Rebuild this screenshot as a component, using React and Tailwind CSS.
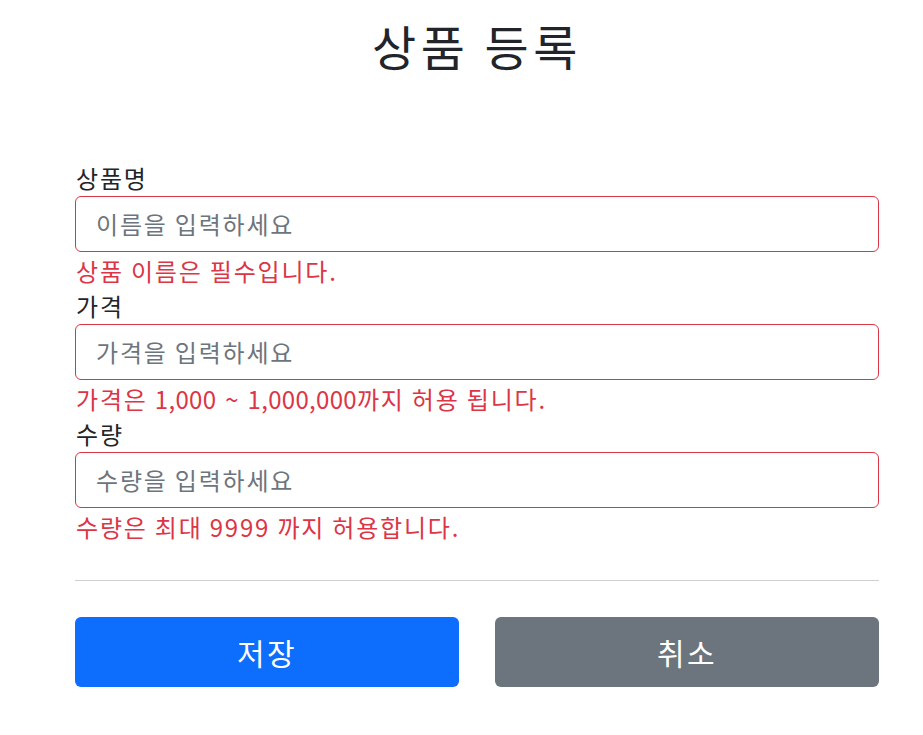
import React from "react";

const font = { fontFamily: '"Noto Sans CJK KR", "Noto Sans", sans-serif' };

function Field({ label, placeholder, error }) {
  return (
    <div className="flex flex-col">
      <label className="text-[24px] leading-[30px] tracking-[1.8px] text-[#212529] pl-[1px] mb-[3px]">{label}</label>
      <div className="h-[56px] border border-[#dc3545] rounded-[6px] flex items-center px-[20px] bg-white">
        <span className="text-[24px] leading-[30px] tracking-[1.8px] text-[#6c757d]">{placeholder}</span>
      </div>
      <div className="mt-[4px] mb-[5px] text-[24px] leading-[30px] tracking-[1.8px] text-[#dc3545] pl-[1px]">{error}</div>
    </div>
  );
}

export default function App() {
  return (
    <div className="w-[923px] h-[735px] bg-white" style={font}>
      <div className="ml-[75px] w-[804px] flex flex-col">
        <h2 className="mt-[21px] h-[48px] text-[48px] leading-[48px] tracking-[4.5px] text-center text-[#212529]">상품 등록</h2>
        <div className="mt-[94px] flex flex-col">
          <Field label="상품명" placeholder="이름을 입력하세요" error="상품 이름은 필수입니다." />
          <Field
            label="가격"
            placeholder="가격을 입력하세요"
            error={
              <>
                가격은 <span className="tracking-[0.3px]">1,000</span>
                <span className="mx-[9px] tracking-normal">~</span>
                <span className="tracking-[0.3px]">1,000,000</span>까지 허용 됩니다.
              </>
            }
          />
          <Field label="수량" placeholder="수량을 입력하세요" error="수량은 최대 9999 까지 허용합니다." />
        </div>
        <hr className="mt-[33px] border-0 border-t border-[#cfcfcf]" />
        <div className="mt-[36px] grid grid-cols-2 gap-[36px]">
          <button className="h-[70px] rounded-[6px] bg-[#0d6efd] text-white text-[30px] tracking-[2.5px]">저장</button>
          <button className="h-[70px] rounded-[6px] bg-[#6c757d] text-white text-[30px] tracking-[2.5px]">취소</button>
        </div>
      </div>
    </div>
  );
}
